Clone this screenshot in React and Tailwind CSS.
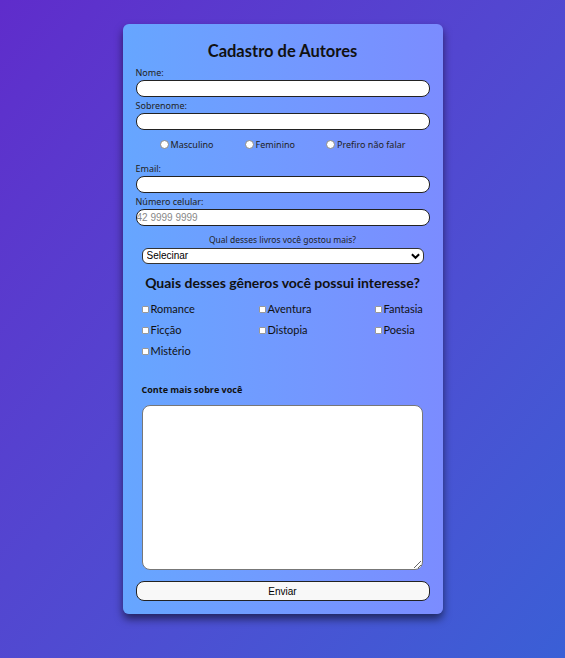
import { useState } from "react";

const genres = ["Romance", "Aventura", "Fantasia", "Ficção", "Distopia", "Poesia", "Mistério"];

export default function App() {
  const [sexo, setSexo] = useState("");

  return (
    <div className="min-h-screen w-full bg-gradient-to-br from-[#5f2ccb] to-[#3a5fd6] pt-6 pb-11 font-['Noto_Sans',sans-serif]">
      <form
        className="mx-auto w-[320px] rounded-md bg-gradient-to-r from-[#66a6ff] to-[#7b8cff] px-[13px] pt-4 pb-[13px] shadow-[0_5px_8px_rgba(0,0,0,0.55)]"
        onSubmit={(e) => e.preventDefault()}
      >
        <h1 className="mt-[1px] text-center text-[16.5px] font-bold leading-5 text-[#111] font-['Lato',sans-serif]">
          Cadastro de Autores
        </h1>

        <label className="mt-[6px] block text-[9px] leading-[11px] text-[#222]">Nome:</label>
        <input className="mt-[2px] block h-[17px] w-full rounded-lg border border-[#222] bg-white px-1 text-[10px] outline-none" />

        <label className="mt-[3px] block text-[9px] leading-[11px] text-[#222]">Sobrenome:</label>
        <input className="mt-[2px] block h-[17px] w-full rounded-lg border border-[#222] bg-white px-1 text-[10px] outline-none" />

        <div className="mt-[9px] flex items-center justify-between pl-[24px] pr-[24px] text-[9px] leading-[11px] text-[#222]">
          {["Masculino", "Feminino", "Prefiro não falar"].map((s) => (
            <label key={s} className="flex items-center gap-[2px]">
              <input
                type="radio"
                name="sexo"
                checked={sexo === s}
                onChange={() => setSexo(s)}
                className="m-0 h-[9px] w-[9px] appearance-none rounded-full border border-[#888] bg-white"
              />
              {s}
            </label>
          ))}
        </div>

        <label className="mt-[13px] block text-[9px] leading-[11px] text-[#222]">Email:</label>
        <input className="mt-[2px] block h-[17px] w-full rounded-lg border border-[#222] bg-white px-1 text-[10px] outline-none" />

        <label className="mt-[3px] block text-[9px] leading-[11px] text-[#222]">Número celular:</label>
        <input
          placeholder="42 9999 9999"
          className="mt-[2px] block h-[17px] w-full rounded-lg border border-[#222] bg-white px-0 text-[10px] outline-none placeholder:text-[#888] font-['Liberation_Sans',sans-serif]"
        />

        <p className="mt-[8px] text-center text-[8.5px] leading-[11px] text-[#222]">
          Qual desses livros você gostou mais?
        </p>
        <div className="relative mx-[6px] mt-[3px]">
          <select className="block h-[16px] w-full appearance-none rounded-md border border-[#333] bg-white pl-1 text-[10px] leading-[14px] text-black outline-none font-['Liberation_Sans',sans-serif]">
            <option>Selecinar</option>
          </select>
          <svg
            className="pointer-events-none absolute right-[4px] top-[4px] h-[8px] w-[9px]"
            viewBox="0 0 10 8"
            fill="none"
            stroke="#000"
            strokeWidth="2.2"
          >
            <path d="M1 2l4 4 4-4" />
          </svg>
        </div>

        <h2 className="mt-[9px] whitespace-nowrap text-center text-[14px] font-bold leading-5 text-[#111] font-['Lato',sans-serif]">
          Quais desses gêneros você possui interesse?
        </h2>

        <div className="mt-[9px] grid grid-cols-[117px_116px_1fr] gap-y-[8px] pl-[6px] text-[11px] leading-[13px] text-[#111] font-['Lato',sans-serif]">
          {genres.map((g) => (
            <label key={g} className="flex items-center gap-[2px]">
              <input
                type="checkbox"
                className="m-0 mt-[2px] h-[7px] w-[7px] appearance-none rounded-[1px] border border-[#999] bg-white"
              />
              {g}
            </label>
          ))}
        </div>

        <p className="mt-[27px] pl-[6px] text-[9px] font-bold leading-[11px] text-[#111] font-['Open_Sans',sans-serif]">
          Conte mais sobre você
        </p>
        <textarea className="mx-[6px] mt-[10px] block h-[165px] w-[281px] rounded-lg border border-[#777] bg-white outline-none" />

        <button
          type="submit"
          className="mt-[11px] block h-[20px] w-full rounded-lg border border-[#222] bg-[#f8f8f8] text-[10px] text-black font-['Liberation_Sans',sans-serif]"
        >
          Enviar
        </button>
      </form>
    </div>
  );
}
